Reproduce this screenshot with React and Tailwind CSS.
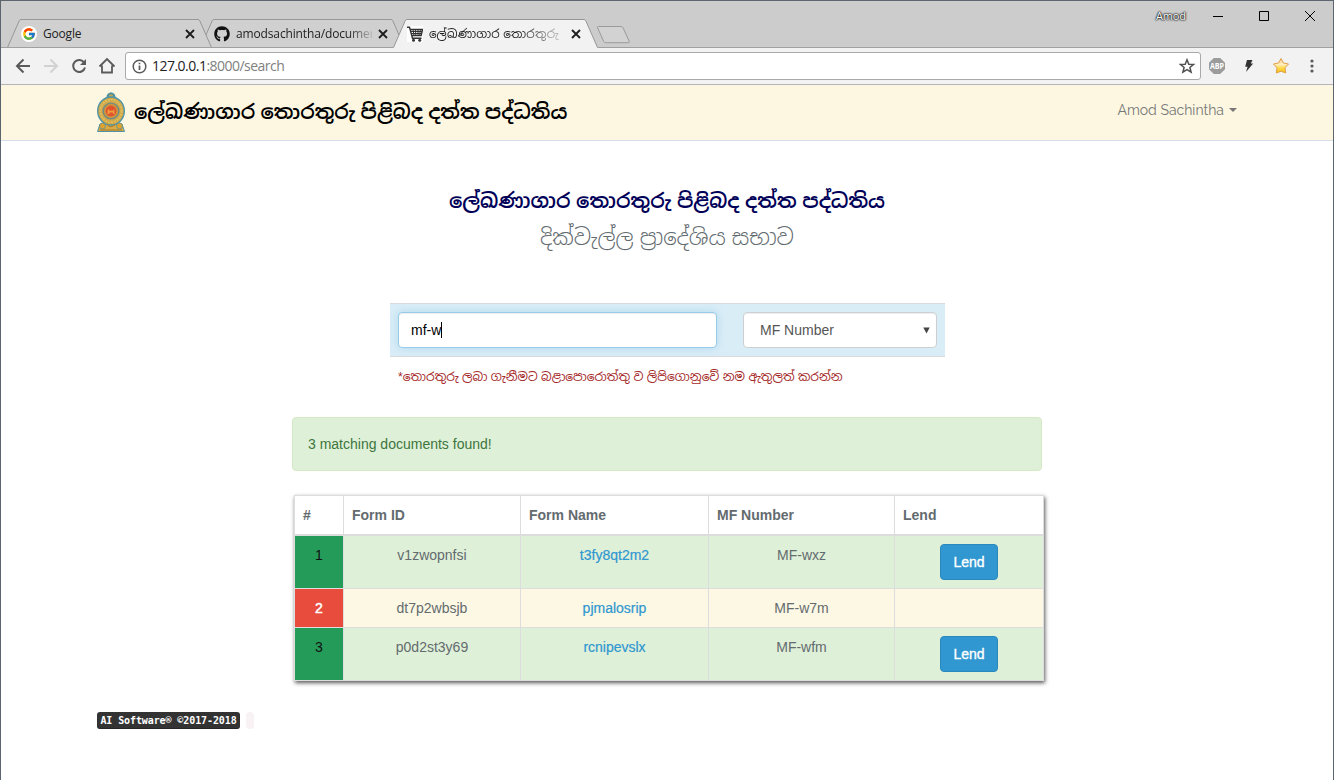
import { FcGoogle } from "react-icons/fc";
import { FaGithub } from "react-icons/fa";

const TITLE = "ලේඛණාගාර තොරතුරු පිළිබද දත්ත පද්ධතිය";

function TabShape({ active }) {
  return (
    <svg className="absolute inset-0" width="206" height="29" viewBox="0 0 206 29">
      <path d="M0.5 28.5 L12.2 1.8 Q12.8 0.5 14 0.5 H191 Q192.300 0.5 192.800 1.8 L204.500 28.5 V29 H0.500Z" fill={active ? "#f2f2f2" : "#d0d0d0"} />
      <path d="M0.5 28.5 L12.2 1.8 Q12.8 0.5 14 0.5 H191 Q192.300 0.5 192.800 1.8 L204.500 28.5" fill="none" stroke="#979797" />
      {!active && <path d="M0 28.5H206" stroke="#a0a0a0" />}
    </svg>
  );
}

function Close({ className }) {
  return (
    <svg className={className} width="10" height="10" viewBox="0 0 10 10">
      <path d="M1 1L9 9M9 1L1 9" stroke="currentColor" strokeWidth="1.8" />
    </svg>
  );
}

function Cart() {
  return (
    <svg width="16" height="16" viewBox="0 0 16 16" className="bg-white">
      <path d="M0 1.200H2.500L5.500 12.300H14.500M3.200 3.500H15.500L14.200 9.500H4.800" fill="none" stroke="#333" strokeWidth="1.400" />
      <path d="M3.500 5.500H15M4 7.500H14.600M6 3.500L7 9.500M8.500 3.500L8.800 9.500M11 3.500V9.500M13.300 3.500L12.700 9.500" stroke="#333" strokeWidth="1" />
      <circle cx="6.500" cy="14.200" r="1.500" fill="#333" />
      <circle cx="12.700" cy="14.200" r="1.500" fill="#333" />
    </svg>
  );
}

function Tab({ icon, label, active, className, textClass }) {
  return (
    <div className={"relative h-[29px] w-[206px] shrink-0 " + className}>
      <TabShape active={active} />
      <div className="relative flex h-full items-center pl-[14px]">
        <span className="flex size-4 items-center justify-center">{icon}</span>
        <span className={"ml-[6px] w-[136px] overflow-hidden whitespace-nowrap text-xs text-[#222] " + textClass}>{label}</span>
        <Close className="ml-[6px] text-[#1c1c1c]" />
      </div>
    </div>
  );
}

function TabStrip() {
  return (
    <div className="flex h-[47px] items-end bg-[#cccccc] shadow-[inset_0_-1px_0_#a0a0a0]">
      <div className="flex pl-[6px]">
        <Tab
          className="z-10"
          textClass="tracking-[-0.2px]"
          label="Google"
          icon={<span className="flex size-4 items-center justify-center rounded-full bg-white"><FcGoogle size={14} /></span>}
        />
        <Tab
          className="-ml-[13px]"
          textClass="tracking-[-0.14px] [mask-image:linear-gradient(to_right,#000_112px,transparent_140px)]"
          label="amodsachintha/documen"
          icon={<FaGithub size={16} color="#111" />}
        />
        <Tab
          active
          className="z-20 -ml-[13px]"
          textClass="tracking-[0.25px] [mask-image:linear-gradient(to_right,#000_90px,transparent_142px)]"
          label="ලේඛණාගාර තොරතුරු"
          icon={<Cart />}
        />
      </div>
      <svg className="mb-[3px] -ml-[4px]" width="37" height="20" viewBox="0 0 37 20">
        <path d="M3.500 1.500H26Q27.500 1.500 28 2.700L34.300 16.500Q34.600 17.700 33.500 17.700H10.800Q9.300 17.700 8.700 16.500L2.700 3Q2 1.500 3.500 1.500Z" fill="#d2d2d2" stroke="#9a9a9a" />
      </svg>
      <div className="ml-auto flex items-center self-start pt-[5px]">
        <span className="mr-[27px] pt-px text-[11px] leading-[18px] tracking-[-0.1px] text-white [text-shadow:0_0_2px_#000,0_0_2px_#000,0_0_1px_#333]">Amod</span>
        <svg className="mr-[16px]" width="104" height="12" viewBox="0 0 104 12" fill="none" stroke="#000">
          <path d="M0 6.500H10M46.500 1.500H55.500V10.500H46.500ZM92 1L102 11M102 1L92 11" />
        </svg>
      </div>
    </div>
  );
}

function Toolbar() {
  return (
    <div className="flex h-[37px] items-center border-b border-[#b6b4b6] bg-[#f2f2f2] pl-[13px]">
      <svg width="102" height="18" viewBox="0 0 102 18" fill="none" stroke="#5a5a5a" strokeWidth="2">
        <path d="M16 9H3.500M9.500 2.500L3 9L9.500 15.500" />
        <path d="M30 9H42.500M36.500 2.500L43 9L36.500 15.500" stroke="#d2d2d2" />
        <path d="M70.300 5.800A6 6 0 1 0 71 10.500" />
        <path d="M72 2V8H66Z" fill="#5a5a5a" stroke="none" />
        <path d="M85.500 9.500L93 2L100.500 9.500M88 8.500V15.500H98V8.500" strokeWidth="1.800" />
      </svg>
      <div className="ml-[9px] flex h-[28px] w-[1076px] items-center rounded-[3px] border border-[#a9a9a9] bg-white pl-[6px] pr-[5px]">
        <svg width="15" height="15" viewBox="0 0 15 15" fill="none" stroke="#5a5a5a">
          <circle cx="7.500" cy="7.500" r="6.300" strokeWidth="1.500" />
          <path d="M7.500 6.500V11M7.500 3.700V5.300" strokeWidth="1.700" />
        </svg>
        <span className="ml-[5px] whitespace-nowrap text-[14px] leading-5 tracking-[-0.52px] text-[#222]">
          127.0.0.1<span className="text-[#808080]">:8000/search</span>
        </span>
        <svg className="ml-auto" width="16" height="16" viewBox="0 0 16 16">
          <path d="M8 1.800L9.800 6.200L14.500 6.500L10.900 9.500L12.100 14.200L8 11.600L3.900 14.200L5.100 9.500L1.500 6.500L6.200 6.200Z" fill="none" stroke="#505050" strokeWidth="1.500" />
        </svg>
      </div>
      <svg className="ml-[8px]" width="16" height="16" viewBox="0 0 16 16">
        <path d="M4.800 0H11.200L16 4.800V11.200L11.200 16H4.800L0 11.200V4.800Z" fill="#9b9b9b" />
        <text x="8" y="11" textAnchor="middle" fontSize="8" fontWeight="bold" fill="#fff" fontFamily="Open Sans, sans-serif" textLength="14" lengthAdjust="spacingAndGlyphs">ABP</text>
      </svg>
      <svg className="ml-[18px]" width="12" height="14" viewBox="0 0 12 14">
        <path d="M4 1H9.500L7.800 4.500H10.200L3 13L4.600 7.800H2.200Z" fill="#333" />
      </svg>
      <svg className="ml-[17px]" width="18" height="18" viewBox="0 0 18 18">
        <defs>
          <linearGradient id="gold" x2="0" y2="1">
            <stop offset="0" stopColor="#f6c98a" />
            <stop offset=".4" stopColor="#fff0c4" />
            <stop offset=".65" stopColor="#ffd94d" />
            <stop offset="1" stopColor="#f3bd10" />
          </linearGradient>
        </defs>
        <path d="M9 1.500L11.400 6L16.500 7L13 10.800L13.700 16L9 14.200L4.300 16L5 10.800L1.500 7L6.600 6Z" fill="url(#gold)" stroke="#dfa14a" strokeLinejoin="round" />
      </svg>
      <svg className="ml-[20px]" width="4" height="14" viewBox="0 0 4 14" fill="#5a5a5a">
        <circle cx="2" cy="2" r="1.600" /><circle cx="2" cy="7" r="1.600" /><circle cx="2" cy="12" r="1.600" />
      </svg>
    </div>
  );
}

function Emblem() {
  return (
    <svg className="mb-[2px]" width="28" height="40" viewBox="0 0 28 40">
      <path d="M9.500 6.500Q9 1 14 0.300Q19 1 18.500 6.500Z" fill="#4f8fa0" />
      <circle cx="14" cy="4.500" r="2.300" fill="#b9a552" />
      <path d="M3 32H25L27.500 39.500H0.500Z" fill="#d9ac45" stroke="#4f94a8" />
      <ellipse cx="14" cy="19" rx="13.300" ry="14" fill="#cfa94a" stroke="#4f94a8" strokeWidth="1.400" />
      <ellipse cx="14" cy="19" rx="10.600" ry="11.200" fill="none" stroke="#e0bd5c" strokeWidth="1.800" strokeDasharray="2 1" />
      <circle cx="14" cy="19" r="8.600" fill="#6f8b86" />
      <circle cx="14" cy="19" r="7.200" fill="#cf9440" />
      <circle cx="14" cy="19" r="5.400" fill="#e0532c" />
      <path d="M10.500 22V18.500L12 16.500V18.500H16.500L17.500 16.500V22H16V20.500H12.500V22Z" fill="#f09a3c" />
      <circle cx="5.500" cy="34" r="3" fill="#e0a22e" stroke="#5d9093" strokeWidth="0.800" />
      <circle cx="22.500" cy="34" r="3" fill="#e0a22e" stroke="#5d9093" strokeWidth="0.800" />
      <path d="M10 32.500Q14 37 18 32.500M3 38H25" stroke="#a7792c" fill="none" />
    </svg>
  );
}

function Navbar() {
  return (
    <nav className="flex h-14 items-center border-b border-[#d3e0e9] bg-[#fdf7e2] pr-[96px] pl-[96px]">
      <Emblem />
      <span className="ml-[9px] whitespace-nowrap pb-[4px] text-[20.2px] leading-[28px] font-semibold text-black">{TITLE}</span>
      <div className="ml-auto flex items-center pb-[5px] font-[Raleway,Lato,sans-serif] text-[14px] text-[#777]">
        Amod Sachintha
        <span className="ml-[5px] border-x-4 border-t-4 border-x-transparent border-t-[#777]" />
      </div>
    </nav>
  );
}

const ROWS = [
  { n: 1, id: "v1zwopnfsi", name: "t3fy8qt2m2", mf: "MF-wxz", lend: true },
  { n: 2, id: "dt7p2wbsjb", name: "pjmalosrip", mf: "MF-w7m", lend: false },
  { n: 3, id: "p0d2st3y69", name: "rcnipevslx", mf: "MF-wfm", lend: true },
];

function Results() {
  const th = "border-r border-b-2 border-[#ddd] px-2 text-left font-bold";
  const td = "border-r border-b border-[#ddd] px-2 pt-[8px] align-top";
  return (
    <table className="mt-[24px] ml-[2px] w-[750px] table-fixed border-separate border-spacing-0 border-t border-l border-[#ddd] text-center text-[14px] leading-[22px] text-[#636b6f] shadow-[1px_2px_4px_rgba(0,0,0,0.65)]">
      <colgroup>
        <col className="w-[49px]" />
        <col className="w-[177px]" />
        <col className="w-[188px]" />
        <col className="w-[186px]" />
        <col className="w-[149px]" />
      </colgroup>
      <thead>
        <tr className="h-[40px] bg-white">
          <th className={th}>#</th>
          <th className={th}>Form ID</th>
          <th className={th}>Form Name</th>
          <th className={th}>MF Number</th>
          <th className={th}>Lend</th>
        </tr>
      </thead>
      <tbody>
        {ROWS.map((r) => (
          <tr key={r.n} className={r.lend ? "h-[53px] bg-[#dff0d8]" : "h-[39px] bg-[#fcf8e3]"}>
            <td className={td + (r.lend ? " bg-[#259b59] text-[#111]" : " bg-[#e74c3c] text-white [-webkit-text-stroke:0.5px_white]")}>{r.n}</td>
            <td className={td}>{r.id}</td>
            <td className={td + " text-[#3097d1] [-webkit-text-stroke:0.2px_#3097d1]"}>{r.name}</td>
            <td className={td}>{r.mf}</td>
            <td className="border-r border-b border-[#ddd] pt-2 align-top">
              {r.lend && (
                <button className="mx-auto block h-[36px] w-[58px] rounded border border-[#2a88bd] bg-[#3097d1] text-[14px] text-white [-webkit-text-stroke:0.35px_white]">Lend</button>
              )}
            </td>
          </tr>
        ))}
      </tbody>
    </table>
  );
}

export default function App() {
  return (
    <div className="h-[780px] w-[1334px] overflow-hidden border border-b-0 border-[#5c656e] bg-white font-['Open_Sans','Noto_Sans_Sinhala',sans-serif]">
      <TabStrip />
      <Toolbar />
      <Navbar />
      <main className="font-['Liberation_Sans','Noto_Sans_Sinhala',sans-serif]">
        <div className="flex flex-col items-center pt-[43px] whitespace-nowrap">
          <h1 className="h-[32px] text-[20.25px] leading-[34px] font-semibold text-[#000058]">{TITLE}</h1>
          <h2 className="mt-[4px] h-[34px] text-[22px] leading-[36px] font-light text-[#636b6f]">දික්වැල්ල ප්‍රාදේශිය සභාව</h2>
        </div>
        <div className="mt-[49px] ml-[389px] flex h-[54px] w-[555px] items-center border-y border-[#d8dadd] bg-[#d9edf7] pl-2 text-[14px]">
          <div className="flex h-[36px] w-[319px] items-center rounded border border-[#98cbe8] bg-white px-3 text-black shadow-[inset_0_1px_1px_rgba(0,0,0,0.075),0_0_8px_rgba(152,203,232,0.6)]">
            mf-w<span className="h-4 w-px bg-black" />
          </div>
          <div className="ml-[26px] flex h-[36px] w-[194px] items-center justify-between rounded border border-[#ccd0d2] bg-white pr-[6px] pl-4 text-[#555] shadow-[inset_0_1px_1px_rgba(0,0,0,0.075)]">
            MF Number
            <svg width="7" height="7" viewBox="0 0 7 7"><path d="M0.300 0.500H6.700L3.500 6.500Z" fill="#444" /></svg>
          </div>
        </div>
        <p className="mt-[9px] ml-[397px] h-[22px] whitespace-nowrap text-[12.28px] leading-[22px] text-[#a52a2a]">*තොරතුරු ලබා ගැනීමට බළාපොරොත්තු ව ලිපිගොනුවේ නම ඇතුලත් කරන්න</p>
        <div className="ml-[291px] w-[750px] pt-[29px]">
          <div className="flex h-[54px] items-center rounded border border-[#d6e9c6] bg-[#dff0d8] px-[15px] text-[14px] text-[#3c763d]">3 matching documents found!</div>
          <Results />
        </div>
        <footer className="mt-[31px] ml-[96px] flex items-center gap-[6px]">
          <kbd className="flex h-[17px] w-[143px] items-center justify-center rounded-[3px] bg-[#333] font-['DejaVu_Sans_Mono',monospace] text-[10px] font-bold tracking-[-0.1px] whitespace-nowrap text-white shadow-[inset_0_-1px_0_rgba(0,0,0,0.25)]">AI Software® ©2017-2018</kbd>
          <span className="h-[17px] w-2 rounded bg-[#f9f2f4]" />
        </footer>
      </main>
    </div>
  );
}
